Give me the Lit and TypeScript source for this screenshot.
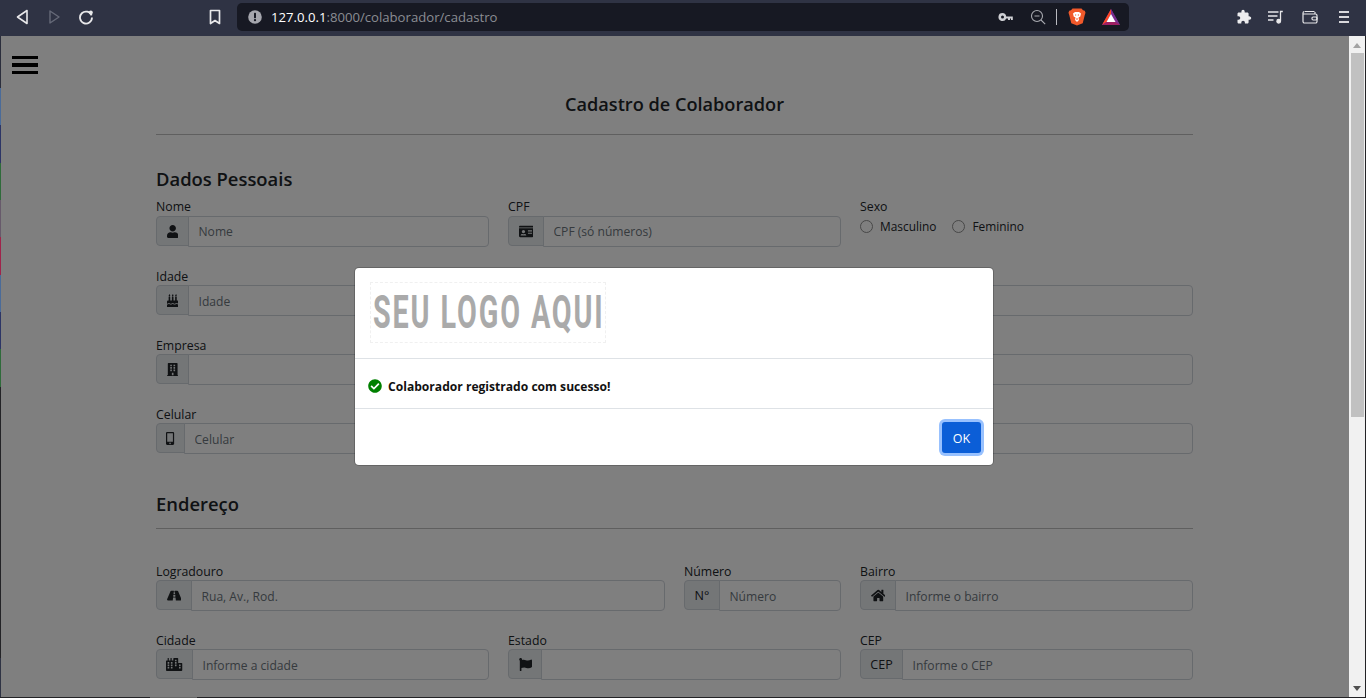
import { LitElement, html, css, svg } from "lit";
import { customElement } from "lit/decorators.js";

const ICONS: Record<string, [number, string]> = {
  user: [448, "M224 256c70.7 0 128-57.3 128-128S294.7 0 224 0 96 57.3 96 128s57.3 128 128 128zm89.6 32h-16.7c-22.2 10.2-46.9 16-72.9 16s-50.6-5.8-72.9-16h-16.7C60.2 288 0 348.2 0 422.4V464c0 26.5 21.5 48 48 48h352c26.5 0 48-21.5 48-48v-41.6c0-74.2-60.2-134.4-134.4-134.4z"],
  card: [576, "M528 32H48C21.5 32 0 53.5 0 80v16h576V80c0-26.5-21.5-48-48-48zM0 432c0 26.5 21.5 48 48 48h480c26.5 0 48-21.5 48-48V128H0v304zm352-232c0-4.4 3.6-8 8-8h144c4.4 0 8 3.6 8 8v16c0 4.4-3.6 8-8 8H360c-4.4 0-8-3.6-8-8v-16zm0 64c0-4.4 3.6-8 8-8h144c4.4 0 8 3.6 8 8v16c0 4.4-3.6 8-8 8H360c-4.4 0-8-3.6-8-8v-16zm0 64c0-4.4 3.6-8 8-8h144c4.4 0 8 3.6 8 8v16c0 4.4-3.6 8-8 8H360c-4.4 0-8-3.6-8-8v-16zM176 192c35.3 0 64 28.7 64 64s-28.7 64-64 64-64-28.7-64-64 28.7-64 64-64zM67.1 396.2C75.5 370.5 99.6 352 128 352h8.2c12.3 5.1 25.7 8 39.8 8s27.6-2.9 39.8-8h8.2c28.4 0 52.5 18.5 60.9 44.2 3.2 9.9-5.2 19.8-15.6 19.8H82.7c-10.4 0-18.8-10-15.6-19.8z"],
  cake: [448, "M448 384c-28.02 0-31.26-32-74.5-32-43.43 0-46.825 32-74.75 32-27.695 0-31.454-32-74.75-32-42.842 0-47.218 32-74.5 32-28.148 0-31.202-32-74.75-32-43.547 0-46.653 32-74.75 32v-80c0-26.5 21.5-48 48-48h16V112h64v144h64V112h64v144h64V112h64v144h16c26.5 0 48 21.5 48 48v80zm0 128H0v-96c43.356 0 46.767-32 74.75-32 27.951 0 31.253 32 74.75 32 42.843 0 47.217-32 74.5-32 28.148 0 31.201 32 74.75 32 43.357 0 46.767-32 74.75-32 27.488 0 31.252 32 74.5 32v96zM96 96c-17.75 0-32-14.25-32-32 0-31 32-23 32-64 12 0 32 29.5 32 56s-14.25 40-32 40zm128 0c-17.75 0-32-14.25-32-32 0-31 32-23 32-64 12 0 32 29.5 32 56s-14.25 40-32 40zm128 0c-17.75 0-32-14.25-32-32 0-31 32-23 32-64 12 0 32 29.5 32 56s-14.25 40-32 40z"],
  building: [448, "M436 480h-20V24c0-13.255-10.745-24-24-24H56C42.745 0 32 10.745 32 24v456H12c-6.627 0-12 5.373-12 12v20h448v-20c0-6.627-5.373-12-12-12zM128 76c0-6.627 5.373-12 12-12h40c6.627 0 12 5.373 12 12v40c0 6.627-5.373 12-12 12h-40c-6.627 0-12-5.373-12-12V76zm0 96c0-6.627 5.373-12 12-12h40c6.627 0 12 5.373 12 12v40c0 6.627-5.373 12-12 12h-40c-6.627 0-12-5.373-12-12v-40zm52 148h-40c-6.627 0-12-5.373-12-12v-40c0-6.627 5.373-12 12-12h40c6.627 0 12 5.373 12 12v40c0 6.627-5.373 12-12 12zm76 160h-64v-84c0-6.627 5.373-12 12-12h40c6.627 0 12 5.373 12 12v84zm64-172c0 6.627-5.373 12-12 12h-40c-6.627 0-12-5.373-12-12v-40c0-6.627 5.373-12 12-12h40c6.627 0 12 5.373 12 12v40zm0-96c0 6.627-5.373 12-12 12h-40c-6.627 0-12-5.373-12-12v-40c0-6.627 5.373-12 12-12h40c6.627 0 12 5.373 12 12v40zm0-96c0 6.627-5.373 12-12 12h-40c-6.627 0-12-5.373-12-12V76c0-6.627 5.373-12 12-12h40c6.627 0 12 5.373 12 12v40z"],
  mobile: [320, "M272 0H48C21.5 0 0 21.5 0 48v416c0 26.5 21.5 48 48 48h224c26.5 0 48-21.5 48-48V48c0-26.5-21.5-48-48-48zM160 480c-17.7 0-32-14.3-32-32s14.3-32 32-32 32 14.3 32 32-14.3 32-32 32zm112-108c0 6.6-5.4 12-12 12H60c-6.6 0-12-5.4-12-12V60c0-6.6 5.4-12 12-12h200c6.6 0 12 5.4 12 12v312z"],
  road: [576, "M573.19 402.67l-139.79-320C428.43 71.29 417.6 64 405.68 64h-97.59l2.45 23.16c.5 4.72-3.21 8.84-7.96 8.84h-29.16c-4.75 0-8.46-4.12-7.96-8.84L267.91 64h-97.59c-11.93 0-22.76 7.29-27.73 18.67L2.8 402.67C-6.45 423.86 8.31 448 30.54 448h196.84l10.31-97.68c.86-8.14 7.72-14.32 15.91-14.32h68.8c8.19 0 15.05 6.18 15.91 14.32L348.62 448h196.84c22.23 0 36.99-24.14 27.73-45.33zM260.4 135.16a8 8 0 0 1 7.96-7.16h39.29c4.09 0 7.53 3.09 7.96 7.16l4.6 43.58c.75 7.09-4.81 13.26-11.93 13.26h-40.54c-7.13 0-12.68-6.17-11.93-13.26l4.59-43.58zM315.64 304h-55.29c-9.5 0-16.91-8.23-15.91-17.68l5.07-48c.86-8.14 7.72-14.32 15.91-14.32h45.15c8.19 0 15.05 6.18 15.91 14.32l5.07 48c1 9.45-6.41 17.68-15.91 17.68z"],
  city: [640, "M616 192H480V24c0-13.26-10.74-24-24-24H312c-13.26 0-24 10.74-24 24v72h-64V16c0-8.84-7.16-16-16-16h-16c-8.84 0-16 7.16-16 16v80h-64V16c0-8.84-7.16-16-16-16H80c-8.84 0-16 7.16-16 16v80H24c-13.26 0-24 10.74-24 24v360c0 17.67 14.33 32 32 32h576c17.67 0 32-14.33 32-32V216c0-13.26-10.75-24-24-24zM128 404c0 6.63-5.37 12-12 12H76c-6.63 0-12-5.37-12-12v-40c0-6.63 5.37-12 12-12h40c6.63 0 12 5.37 12 12v40zm0-96c0 6.63-5.37 12-12 12H76c-6.63 0-12-5.37-12-12v-40c0-6.63 5.37-12 12-12h40c6.63 0 12 5.37 12 12v40zm0-96c0 6.63-5.37 12-12 12H76c-6.63 0-12-5.37-12-12v-40c0-6.63 5.37-12 12-12h40c6.63 0 12 5.37 12 12v40zm128 192c0 6.63-5.37 12-12 12h-40c-6.63 0-12-5.37-12-12v-40c0-6.63 5.37-12 12-12h40c6.63 0 12 5.37 12 12v40zm0-96c0 6.63-5.37 12-12 12h-40c-6.63 0-12-5.37-12-12v-40c0-6.63 5.37-12 12-12h40c6.63 0 12 5.37 12 12v40zm0-96c0 6.63-5.37 12-12 12h-40c-6.63 0-12-5.37-12-12v-40c0-6.63 5.37-12 12-12h40c6.63 0 12 5.37 12 12v40zm160 96c0 6.63-5.37 12-12 12h-40c-6.63 0-12-5.37-12-12v-40c0-6.63 5.37-12 12-12h40c6.63 0 12 5.37 12 12v40zm0-96c0 6.63-5.37 12-12 12h-40c-6.63 0-12-5.37-12-12v-40c0-6.63 5.37-12 12-12h40c6.63 0 12 5.37 12 12v40zm0-96c0 6.63-5.37 12-12 12h-40c-6.63 0-12-5.37-12-12V76c0-6.63 5.37-12 12-12h40c6.63 0 12 5.37 12 12v40zm160 288c0 6.63-5.37 12-12 12h-40c-6.63 0-12-5.37-12-12v-40c0-6.63 5.37-12 12-12h40c6.63 0 12 5.37 12 12v40zm0-96c0 6.63-5.37 12-12 12h-40c-6.63 0-12-5.37-12-12v-40c0-6.63 5.37-12 12-12h40c6.63 0 12 5.37 12 12v40z"],
  flag: [512, "M349.565 98.783C295.978 98.783 251.721 64 184.348 64c-24.955 0-47.309 4.384-68.045 12.013a55.947 55.947 0 0 0 3.586-23.562C118.117 24.015 94.806 1.206 66.338.048 34.345-1.254 8 24.296 8 56c0 19.026 9.497 35.825 24 45.945V488c0 13.255 10.745 24 24 24h16c13.255 0 24-10.745 24-24v-94.4c28.311-12.064 63.582-22.122 114.435-22.122 53.588 0 97.844 34.783 165.217 34.783 48.169 0 86.667-16.294 122.505-40.858C506.84 359.452 512 349.571 512 339.045v-243.1c0-23.393-24.269-38.87-45.485-29.016-34.338 15.948-76.454 31.854-116.95 31.854z"],
  home: [576, "M280.37 148.26L96 300.11V464a16 16 0 0 0 16 16l112.06-.29a16 16 0 0 0 15.92-16V368a16 16 0 0 1 16-16h64a16 16 0 0 1 16 16v95.64a16 16 0 0 0 16 16.05L464 480a16 16 0 0 0 16-16V300L295.67 148.26a12.19 12.19 0 0 0-15.3 0zM571.6 251.47L488 182.56V44.05a12 12 0 0 0-12-12h-56a12 12 0 0 0-12 12v72.61L318.47 43a48 48 0 0 0-61 0L4.34 251.47a12 12 0 0 0-1.6 16.9l25.5 31A12 12 0 0 0 45.15 301l235.22-193.74a12.19 12.19 0 0 1 15.3 0L530.9 301a12 12 0 0 0 16.9-1.6l25.5-31a12 12 0 0 0-1.7-16.93z"],
  check: [512, "M504 256c0 136.967-111.033 248-248 248S8 392.967 8 256 119.033 8 256 8s248 111.033 248 248zM227.314 387.314l184-184c6.248-6.248 6.248-16.379 0-22.627l-22.627-22.627c-6.248-6.249-16.379-6.249-22.628 0L216 308.118l-70.059-70.059c-6.248-6.248-16.379-6.248-22.628 0l-22.627 22.627c-6.248 6.248-6.248 16.379 0 22.627l104 104c6.249 6.249 16.379 6.249 22.628 0z"],
};

const fa = (name: string, h = 13) => {
  const [w, d] = ICONS[name];
  return html`<svg class="fa" viewBox="0 0 ${w} 512" width=${(w / 512) * h} height=${h} fill="currentColor">${svg`<path d=${d}></path>`}</svg>`;
};

interface Field { col: number; label?: string; icon?: string; text?: string; addon?: number; ph?: string; }

const sectionA: Field[] = [
  { col: 4, label: "Nome", icon: "user", addon: 32, ph: "Nome" },
  { col: 4, label: "CPF", icon: "card", addon: 35, ph: "CPF (só números)" },
  { col: 4, label: "Sexo" },
  { col: 4, label: "Idade", icon: "cake", addon: 32, ph: "Idade" },
  { col: 4 },
  { col: 4 },
  { col: 4, label: "Empresa", icon: "building", addon: 32 },
  { col: 4 },
  { col: 4 },
  { col: 4, label: "Celular", icon: "mobile", addon: 28, ph: "Celular" },
  { col: 4 },
  { col: 4 },
];

const sectionB: Field[] = [
  { col: 6, label: "Logradouro", icon: "road", addon: 35, ph: "Rua, Av., Rod." },
  { col: 2, label: "Número", text: "N°", addon: 35, ph: "Número" },
  { col: 4, label: "Bairro", icon: "home", addon: 35, ph: "Informe o bairro" },
  { col: 4, label: "Cidade", icon: "city", addon: 36, ph: "Informe a cidade" },
  { col: 4, label: "Estado", icon: "flag", addon: 33 },
  { col: 4, label: "CEP", text: "CEP", addon: 42, ph: "Informe o CEP" },
];

const EDGE: [number, string][] = [
  [52, "#2b2e3c"], [37, "#4a6b99"], [38, "#2c3566"], [37, "#2f6b3a"], [37, "#675a6b"],
  [38, "#a0234a"], [37, "#4a6b99"], [37, "#2c3566"], [38, "#2f6b3a"], [271, "#232326"],
];

@customElement("app-root")
export class AppRoot extends LitElement {
  static styles = css`
    :host { display: block; width: 1366px; height: 698px; overflow: hidden; background: #2f3344;
      font-family: "Open Sans", "Noto Sans", sans-serif; color: #212529; }
    * { box-sizing: border-box; }
    .toolbar { height: 36px; display: flex; align-items: center; padding: 0 0 2px 14px; background: #2f3344; }
    .toolbar svg { display: block; flex: none; }
    .nav { display: flex; gap: 16px; }
    .mark { margin-left: 113px; }
    .urlbar { margin-left: 14px; width: 892px; height: 28px; background: #171923; border-radius: 5px;
      display: flex; align-items: center; padding: 0 9px 0 10px; }
    .url { flex: 1; margin-left: 8px; font-size: 13.15px; color: #8b8d93; white-space: nowrap; }
    .url b { color: #fff; font-weight: 400; }
    .zoomout { margin-left: 16px; }
    .sep { width: 1px; height: 16px; background: #b9bac0; margin: 0 11px 0 10px; }
    .bat { margin-left: 16px; }
    .tools { display: flex; align-items: center; gap: 18px; margin-left: 107px; }
    .tools .play { margin-left: -2px; }

    .viewport { height: 661px; display: flex; }
    .edge { width: 1px; flex: none; display: flex; flex-direction: column; }
    .edge span { display: block; flex: none; }
    .page { width: 1348px; flex: none; position: relative; overflow: hidden; background: #fff; }
    .burger { margin: 20px 0 0 11px; width: 26px; height: 18px; display: flex; flex-direction: column; justify-content: space-between; }
    .burger span { height: 3.4px; background: #000; }
    .form { margin-left: 155px; width: 1037px; }
    h1 { margin: 18px 0 0; font-size: 18.15px; line-height: 24px; font-weight: 600; text-align: center; }
    hr { margin: 18px 0 0; border: 0; height: 1px; background: #bfbfbf; }
    h2 { margin: 32px 0 0; font-size: 18.4px; line-height: 24px; font-weight: 600; }
    .end { margin-top: 38px; }
    .end + hr { margin-top: 12px; }
    .grid { display: grid; grid-template-columns: repeat(12, 69px); column-gap: 19px; row-gap: 20px; margin-top: 7px; }
    .grid.b { margin-top: 33px; }
    .field { min-width: 0; }
    label { display: block; height: 18px; font-size: 12.3px; line-height: 18px; }
    .group { display: flex; align-items: flex-start; height: 31px; }
    .addon { flex: none; height: 30px; display: flex; align-items: center; justify-content: center; background: #e9ecef;
      border: 1px solid #ced4da; border-radius: 4px 0 0 4px; font-size: 12.5px; margin-right: -1px; }
    input { flex: 1; min-width: 0; height: 31px; border: 1px solid #ced4da; border-radius: 0 4px 4px 0; background: #fff;
      padding: 0 10px 0 9.5px; font: inherit; font-size: 12.1px; outline: none; color: #212529; }
    input.solo { border-radius: 4px; }
    input::placeholder { color: #6c757d; opacity: 1; }
    .shifted label { padding-top: 1px; line-height: 18px; }
    .shifted input { padding-top: 2px; }
    .shifted .addon { padding-top: 1px; }
    .radios { display: flex; align-items: center; height: 20px; font-size: 11.9px; }
    .radio { width: 13px; height: 13px; border: 1px solid #8f8f8f; border-radius: 50%; margin-right: 7px; }
    .radios span + .radio { margin-left: 16px; }
    .fa { display: block; }

    .backdrop { position: absolute; inset: 0; background: rgba(0, 0, 0, 0.5); padding: 232px 0 0 354px; }
    .modal { width: 638px; height: 197px; background: #fff; border-radius: 4px; box-shadow: 0 0 0 1px rgba(0, 0, 0, 0.2);
      display: flex; flex-direction: column; }
    .m-head { height: 91px; padding: 14px 0 0 15px; border-bottom: 1px solid #dee2e6; }
    .logo { width: 236px; height: 61px; border: 1px dashed #f0f0f0; overflow: hidden; padding: 0 0 0 2px; }
    .logo span { display: inline-block; white-space: nowrap; font-family: Roboto, sans-serif; font-weight: 700; font-size: 46px;
      line-height: 59px; letter-spacing: 3px; color: #aaaaaa; transform: scaleX(0.625); transform-origin: left center; }
    .m-body { height: 50px; padding: 5px 0 0 13px; display: flex; align-items: center; gap: 6px; border-bottom: 1px solid #dee2e6;
      font-size: 12.1px; font-weight: 700; color: #111; }
    .m-body .fa { color: #008000; }
    .m-foot { flex: 1; display: flex; justify-content: flex-end; padding: 13px 12px 0 0; }
    button { width: 39px; height: 31px; border: 0; border-radius: 3px; background: #0b5ed7; color: #fff; font: inherit; font-size: 12.5px;
      box-shadow: 0 0 0 3px #98c1fe; padding: 2px 0 0; }

    .scroll { width: 16px; flex: none; background: #f1f1f1; display: flex; flex-direction: column; align-items: center; }
    .up { width: 0; height: 0; border: 4px solid transparent; border-top: 0; border-bottom: 5px solid #a3a3a3; margin-top: 7px; }
    .thumb { width: 13px; height: 364px; background: #c1c1c1; margin-top: 5px; }
    .down { width: 0; height: 0; border: 4px solid transparent; border-bottom: 0; border-top: 5px solid #505050; margin-top: auto; margin-bottom: 6px; }
    .right { width: 1px; flex: none; background: #232326; }
    .bottom { height: 1px; display: flex; background: #232326; }
    .bottom span { width: 47px; margin-left: 150px; background: #666; }
  `;

  private field(f: Field, shifted: boolean) {
    const isSexo = f.label === "Sexo";
    return html`<div class="field ${shifted ? "shifted" : ""}" style="grid-column: span ${f.col}">
      <label>${f.label ?? ""}</label>
      ${isSexo
        ? html`<div class="radios"><i class="radio"></i><span>Masculino</span><i class="radio"></i><span>Feminino</span></div>`
        : html`<div class="group">
            ${f.addon
              ? html`<div class="addon" style="width:${f.addon + 1}px">${f.icon ? fa(f.icon) : f.text}</div>`
              : ""}
            <input class=${f.addon ? "" : "solo"} placeholder=${f.ph ?? ""} />
          </div>`}
    </div>`;
  }

  render() {
    return html`
      <div class="toolbar">
        <div class="nav">
          <svg width="16" height="16" viewBox="0 0 16 16" fill="none" stroke="#e8e8ea" stroke-width="1.6" stroke-linejoin="round"><path d="M13 1.5v13L3.5 8z"/></svg>
          <svg width="16" height="16" viewBox="0 0 16 16" fill="none" stroke="#666a78" stroke-width="1.4" stroke-linejoin="round"><path d="M4 2v12l9-6z"/></svg>
          <svg width="16" height="16" viewBox="0 0 16 16" fill="none" stroke="#e8e8ea" stroke-width="1.8"><path d="M13.6 6.4A6 6 0 1 0 14 8.5"/><circle cx="12.8" cy="3.4" r="2" fill="#e8e8ea" stroke="none"/></svg>
        </div>
        <svg class="mark" width="16" height="16" viewBox="0 0 16 16" fill="none" stroke="#e8e8ea" stroke-width="1.7" stroke-linejoin="round"><path d="M3.5 1.5h9v13L8 11.5l-4.5 3z"/></svg>
        <div class="urlbar">
          <svg width="16" height="16" viewBox="0 0 16 16"><circle cx="8" cy="8" r="6.8" fill="#a5a6ad"/><rect x="7" y="3.8" width="2" height="5.4" rx=".6" fill="#171923"/><circle cx="8" cy="11.2" r="1.15" fill="#171923"/></svg>
          <div class="url"><b>127.0.0.1</b>:8000/colaborador/cadastro</div>
          <svg width="16" height="16" viewBox="0 0 16 16" fill="#cfd0d4"><path d="M4.500 4a4 4 0 1 0 3.700 5.400H10V11h2V9.400h1V11h1.800V7.600H8.200A4 4 0 0 0 4.500 4zm0 2.500a1.500 1.500 0 1 1 0 3 1.500 1.500 0 0 1 0-3z"/></svg>
          <svg class="zoomout" width="16" height="16" viewBox="0 0 16 16" fill="none" stroke="#a9aab0" stroke-width="1.1"><circle cx="7" cy="7" r="5.5"/><path d="M11 11l4.200 4.200M4.500 7h5"/></svg>
          <div class="sep"></div>
          <svg width="18" height="18" viewBox="0 0 18 18"><path d="M4.500.5h9l1.500 1.800 1.800.4.700 2-.8 2.500-2 8-5.700 2.300-5.700-2.300-2-8-.8-2.500.7-2 1.800-.4z" fill="#f1592a"/><path d="M5 5.500l2-1.500h4l2 1.500-.7 3-1.800 1 .5 2.500L9 14l-2-2 .5-2.500-1.800-1z" fill="#fff"/><path d="M7 7h1.200M9.800 7H11M8 11h2" stroke="#f1592a" stroke-width="1" fill="none"/></svg>
          <svg class="bat" width="18" height="16" viewBox="0 0 18 16"><path d="M9 0l9 16H0z" fill="#662d91"/><path d="M9 0L0 16l4.500-3L9 5z" fill="#ff4724"/><path d="M9 0v5l4.500 8L18 16z" fill="#7b2d8e"/><path d="M0 16h18l-4.500-3h-9z" fill="#9e1f63"/><path d="M9 5l4.500 8h-9z" fill="#fff"/></svg>
        </div>
        <div class="tools">
          <svg width="16" height="16" viewBox="0 0 16 16" fill="#ececee"><path d="M13.600 7.300h-1V4.700c0-.7-.6-1.300-1.300-1.300H8.700v-1a1.650 1.650 0 0 0-3.300 0v1H2.800c-.7 0-1.300.6-1.300 1.300v2.500h1a1.800 1.800 0 0 1 0 3.600h-1v2.500c0 .7.6 1.300 1.300 1.300h2.500v-1a1.800 1.800 0 0 1 3.600 0v1h2.400c.7 0 1.300-.6 1.300-1.300v-2.600h1a1.650 1.650 0 0 0 0-3.300z"/></svg>
          <svg class="play" width="16" height="16" viewBox="0 0 16 16" fill="none" stroke="#e8e8ea" stroke-width="1.300"><path d="M0 3h10.500M0 7h9.500M0 11h5.500M14.800 2.500h-2.300v9.500"/><circle cx="10.700" cy="12.300" r="1.800" fill="#e8e8ea"/></svg>
          <svg width="16" height="16" viewBox="0 0 16 16" fill="none" stroke="#e8e8ea" stroke-width="1.200"><path d="M3 2.500h9.500M13 5V3M2.500 2.500A1.500 1.500 0 0 0 1 4v8.500A1.500 1.500 0 0 0 2.500 14h11a1.500 1.500 0 0 0 1.500-1.500V6.500A1.500 1.500 0 0 0 13.500 5H1.500"/><rect x="10" y="8" width="5" height="3" rx="1.200"/></svg>
          <svg width="16" height="16" viewBox="0 0 16 16" stroke="#d8d8dc" stroke-width="1.800"><path d="M3 3h10M3 8h10M3 13h10"/></svg>
        </div>
      </div>

      <div class="viewport">
        <div class="edge">${EDGE.map(([h, c]) => html`<span style="height:${h}px;background:${c}"></span>`)}</div>
        <div class="page">
          <div class="burger"><span></span><span></span><span></span></div>
          <div class="form">
            <h1>Cadastro de Colaborador</h1>
            <hr />
            <h2>Dados Pessoais</h2>
            <div class="grid">${sectionA.map((f, i) => this.field(f, i >= 3))}</div>
            <h2 class="end">Endereço</h2>
            <hr />
            <div class="grid b">${sectionB.map((f) => this.field(f, true))}</div>
          </div>
          <div class="backdrop">
            <div class="modal">
              <div class="m-head"><div class="logo"><span>SEU LOGO AQUI</span></div></div>
              <div class="m-body">${fa("check", 14)}<span>Colaborador registrado com sucesso!</span></div>
              <div class="m-foot"><button>OK</button></div>
            </div>
          </div>
        </div>
        <div class="scroll"><i class="up"></i><i class="thumb"></i><i class="down"></i></div>
        <div class="right"></div>
      </div>
      <div class="bottom"><span></span></div>
    `;
  }
}
